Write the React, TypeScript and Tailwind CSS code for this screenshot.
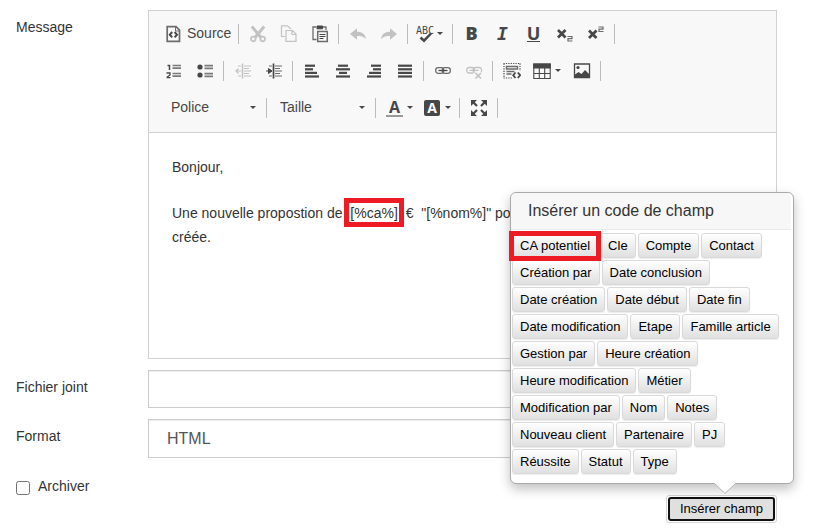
import type { ReactNode } from 'react';

function Icon({ children }: { children: ReactNode }) {
  return (
    <svg width="18" height="18" viewBox="0 0 18 18" fill="none" stroke="currentColor" strokeWidth="1.5" className="shrink-0" aria-hidden="true">
      {children}
    </svg>
  );
}

function Caret() {
  return <span className="h-0 w-0 shrink-0 border-x-[3px] border-t-[3px] border-x-transparent border-t-[#474747]" />;
}

function Tool({ label, children, disabled = false }: { label: string; children: ReactNode; disabled?: boolean }) {
  return (
    <button
      type="button"
      title={label}
      aria-label={label}
      disabled={disabled}
      className="flex h-7 w-[31px] items-center justify-center text-[#474747] disabled:text-[#c2c2c2]"
    >
      {children}
    </button>
  );
}

function MenuTool({ label, children }: { label: string; children: ReactNode }) {
  return (
    <button type="button" title={label} aria-label={label} className="flex h-7 w-[38px] items-center gap-[3px] pl-[5px] text-[#474747]">
      {children}
      <Caret />
    </button>
  );
}

function Combo({ label }: { label: string }) {
  return (
    <button type="button" className="flex h-7 w-[102px] items-center justify-between pr-[7px] pl-[10px] text-[14px] text-[#474747]">
      {label}
      <Caret />
    </button>
  );
}

function Sep() {
  return <span className="mx-[3px] h-5 w-px shrink-0 bg-[#bcbcbc]" />;
}

function Bars({ rows }: { rows: [number, number][] }) {
  return (
    <Icon>
      {rows.map(([from, to], i) => (
        <path key={i} d={`M${from} ${3.7 + i * 3.6}H${to}`} strokeWidth="2.2" />
      ))}
    </Icon>
  );
}

const undoPath = 'M1 9 8 3.2V6.800c5.200 0 8.200 2 9 7.400-2.500-2.700-5-3.200-9-3.200v3.700z';

function Toolbar() {
  return (
    <div role="toolbar" className="border-b border-[#d1d1d1] bg-[#f8f8f8] px-[9px] pt-1 pb-[6px]">
      <div className="flex h-[37px] items-center">
        <button type="button" className="flex h-7 w-[77px] items-center gap-1 pl-[7px] text-[14px] text-[#474747]">
          <Icon>
            <path d="M2.200 1.700H11L14.500 5.200V16.300H2.200z" stroke="#6b6b6b" strokeWidth="1.700" />
            <path d="M10.500 2v4h4" stroke="#6b6b6b" strokeWidth="1" />
            <path d="M7.200 7 4.800 9.700l2.400 2.700M9.600 7l2.400 2.700-2.400 2.700" strokeWidth="2" />
          </Icon>
          Source
        </button>
        <Sep />
        <Tool label="Couper" disabled>
          <Icon>
            <path d="M2.800 1.500 12 12.500M15.200 1.500 6 12.500" strokeWidth="3" />
            <circle cx="4.300" cy="14" r="2.300" strokeWidth="1.700" />
            <circle cx="13.700" cy="14" r="2.300" strokeWidth="1.700" />
          </Icon>
        </Tool>
        <Tool label="Copier" disabled>
          <Icon>
            <path d="M5 11.500H1.500V.8H7.500L11 4" strokeWidth="1.200" />
            <path d="M6 5.500H12.500L16 9V16.300H6zM12 5.500v4h4" strokeWidth="1.200" />
          </Icon>
        </Tool>
        <Tool label="Coller">
          <Icon>
            <path d="M5 2H2V14.500H5.500M12 2H15V5" stroke="#6b6b6b" strokeWidth="1.300" />
            <path d="M6 1h5.500v2.800H6z" fill="currentColor" strokeWidth="1" />
            <path d="M6.700 6.500H16.300V16.500H6.700z" stroke="#6b6b6b" />
            <path d="M8.500 9.500h6M8.500 11.500h6M8.500 13.500h4" strokeWidth="1" />
          </Icon>
        </Tool>
        <Sep />
        <Tool label="Annuler" disabled>
          <Icon><path d={undoPath} fill="currentColor" stroke="none" /></Icon>
        </Tool>
        <Tool label="Rétablir" disabled>
          <Icon><path d={undoPath} transform="matrix(-1 0 0 1 18 0)" fill="currentColor" stroke="none" /></Icon>
        </Tool>
        <Sep />
        <MenuTool label="Orthographe">
          <Icon>
            <text x="0" y="8.500" fontSize="10" fontFamily="DejaVu Sans Mono, monospace" fill="currentColor" stroke="none">ABC</text>
            <path d="M4.500 12.500 8 15.700 15 8.500" strokeWidth="2.500" />
          </Icon>
        </MenuTool>
        <Sep />
        <Tool label="Gras"><span className="pb-px font-['Open_Sans'] text-[18px] leading-[18px] font-extrabold">B</span></Tool>
        <Tool label="Italique"><span className="font-['DejaVu_Sans_Mono'] text-[18px] leading-5 font-bold italic">I</span></Tool>
        <Tool label="Souligné">
          <span className="border-b border-current font-['Open_Sans'] text-[18px] leading-[15px] font-bold">U</span>
        </Tool>
        <Tool label="Indice">
          <Icon>
            <path d="M2 5 9.500 12.500M9.500 5 2 12.500" strokeWidth="2.700" />
            <path d="M11.500 11.500h4.500v2.200h-4v2.300H16.500" stroke="#6b6b6b" strokeWidth="1.200" />
          </Icon>
        </Tool>
        <Tool label="Exposant">
          <Icon>
            <path d="M2 5.500 9.500 13M9.500 5.500 2 13" strokeWidth="2.700" />
            <path d="M11.500 2h4.500v2.200h-4v2.300H16.500" stroke="#6b6b6b" strokeWidth="1.200" />
          </Icon>
        </Tool>
        <Sep />
      </div>

      <div className="flex h-[37px] items-center">
        <Tool label="Liste numérotée">
          <Icon>
            <path d="M2.500 3.500H4.500V8" strokeWidth="1.500" />
            <path d="M1.500 11H5V13L2.200 15V15.600H5.500" strokeWidth="1.300" />
            <path d="M7.500 3.500h8.500M7.500 6.200h8.500M7.500 11.500h8.500M7.500 14.200h8.500" stroke="#7a7a7a" strokeWidth="1.700" />
          </Icon>
        </Tool>
        <Tool label="Liste à puces">
          <Icon>
            <circle cx="4" cy="5" r="2.600" fill="currentColor" stroke="none" />
            <circle cx="4" cy="13" r="2.600" fill="currentColor" stroke="none" />
            <path d="M8.500 3.700h8.500M8.500 6.400h8.500M8.500 11.700h8.500M8.500 14.400h8.500" stroke="#7a7a7a" strokeWidth="1.700" />
          </Icon>
        </Tool>
        <Sep />
        <Tool label="Diminuer le retrait" disabled>
          <Icon>
            <path d="M8.500 1.500V16.500" strokeWidth="1.500" />
            <path d="M7 9H2M4.500 6.500 2 9 4.500 11.500" strokeWidth="1.200" />
            <path d="M10 4h7M10 6.500h5M10 9h7M10 11.500h5M10 14h7M4 4h3M4 14h3" strokeWidth="1.100" />
          </Icon>
        </Tool>
        <Tool label="Augmenter le retrait">
          <Icon>
            <path d="M8.500 1.500V16.500" strokeWidth="1.700" />
            <path d="M1 9H7M3.500 6.500 7 9 3.500 11.500z" fill="currentColor" strokeWidth="1" />
            <path d="M10 4h7M10 6.500h5M10 9h7M10 11.500h5M10 14h7M4 4h3M4 14h3" stroke="#6b6b6b" strokeWidth="1.200" />
          </Icon>
        </Tool>
        <Sep />
        <Tool label="Aligner à gauche"><Bars rows={[[2, 12], [2, 10], [2, 14], [2, 16]]} /></Tool>
        <Tool label="Centrer"><Bars rows={[[4, 14], [2, 16], [5, 13], [2, 16]]} /></Tool>
        <Tool label="Aligner à droite"><Bars rows={[[6, 16], [8, 16], [4, 16], [2, 16]]} /></Tool>
        <Tool label="Justifier"><Bars rows={[[2, 16], [2, 16], [2, 16], [2, 16]]} /></Tool>
        <Sep />
        <Tool label="Lien">
          <Icon>
            <rect x="1.700" y="5.700" width="8" height="5.600" rx="2.500" stroke="#6b6b6b" strokeWidth="1.300" />
            <rect x="8.300" y="5.700" width="8" height="5.600" rx="2.500" stroke="#6b6b6b" strokeWidth="1.300" />
            <path d="M4.500 8.500h9" strokeWidth="1.300" />
          </Icon>
        </Tool>
        <Tool label="Supprimer le lien" disabled>
          <Icon>
            <path d="M8 11H4C1 11 1 5.500 4 5.500H7C10 5.500 10 9 8.500 9.500M9.500 11C7 9 8 5.500 10.500 5.500h3.500c3 0 3 3.500 2 4.500M4.500 8.300h9" strokeWidth="1.300" />
            <path d="M10.500 11l5.500 5.500M16 11l-5.500 5.500" strokeWidth="1.700" />
          </Icon>
        </Tool>
        <Sep />
        <Tool label="Créer un conteneur">
          <Icon>
            <path d="M.5 1.500H17.500M.5 16H9M1 1.500V16M17 1.500V9" strokeDasharray="1.200 1.200" strokeWidth="1.200" />
            <path d="M3.500 4.500H14.500V7H3.500zM3.500 9.500h8M3.500 12h5" stroke="#6b6b6b" strokeWidth="1.400" />
            <path d="M12.500 10.500 10.200 13.200l2.300 2.800M14.800 10.500l2.300 2.700-2.300 2.800" strokeWidth="1.800" />
          </Icon>
        </Tool>
        <button type="button" title="Tableau" aria-label="Tableau" className="flex h-7 w-[39px] items-center gap-1 pl-[6px] text-[#474747]">
          <Icon>
            <path d="M.8 2H17.200V16.500H.8zM1 11.500h16M6.300 6v10.500M11.700 6v10.500" strokeWidth="1.100" />
            <path d="M.2 1.500H17.800V6.500H.2z" fill="currentColor" stroke="none" />
          </Icon>
          <Caret />
        </button>
        <Tool label="Image">
          <Icon>
            <path d="M1.500 2H16.500V15.500H1.500z" strokeWidth="1.300" />
            <circle cx="5" cy="5.500" r="1.600" fill="currentColor" stroke="none" />
            <path d="M2 15V12.500L5.500 10l3 2L12 8l4 4v3z" fill="currentColor" stroke="none" />
          </Icon>
        </Tool>
        <Sep />
      </div>

      <div className="flex h-[37px] items-center">
        <span className="pl-[3px]"><Combo label="Police" /></span>
        <Sep />
        <Combo label="Taille" />
        <Sep />
        <button type="button" title="Couleur du texte" aria-label="Couleur du texte" className="flex h-7 w-[38px] items-center gap-1 pl-[7px] text-[#474747]">
          <span className="w-[17px] border-b-2 border-[#999] text-center font-['Open_Sans'] text-[16px] leading-4 font-bold">A</span>
          <Caret />
        </button>
        <button type="button" title="Couleur d'arrière-plan" aria-label="Couleur d'arrière-plan" className="flex h-7 w-[39px] items-center gap-[5px] pl-[7px] text-[#474747]">
          <span className="h-4 w-4 rounded-[2px] bg-[#474747] text-center font-['Open_Sans'] text-[14px] leading-4 font-bold text-white">A</span>
          <Caret />
        </button>
        <Sep />
        <Tool label="Agrandir">
          <Icon>
            <path d="M2.500 2.500 7 7M15.500 2.500 11 7M2.500 15.500 7 11M15.500 15.500 11 11" strokeWidth="2.200" />
            <path d="M1 1h6L1 7zM17 1h-6l6 6zM1 17h6l-6-6zM17 17h-6l6-6z" fill="currentColor" stroke="none" />
          </Icon>
        </Tool>
        <Sep />
      </div>
    </div>
  );
}

const fieldRows = [
  ['CA potentiel', 'Cle', 'Compte', 'Contact'],
  ['Création par', 'Date conclusion'],
  ['Date création', 'Date début', 'Date fin'],
  ['Date modification', 'Etape', 'Famille article'],
  ['Gestion par', 'Heure création'],
  ['Heure modification', 'Métier'],
  ['Modification par', 'Nom', 'Notes'],
  ['Nouveau client', 'Partenaire', 'PJ'],
  ['Réussite', 'Statut', 'Type'],
];

function FieldPopover() {
  return (
    <div
      role="dialog"
      aria-label="Insérer un code de champ"
      className="absolute -right-[17px] bottom-full mb-[11px] w-[284px] rounded-md border border-[#a9a9a9] bg-white pr-[2px] pb-[9px] shadow-[0_5px_12px_rgba(0,0,0,0.25)]"
    >
      <h3 className="rounded-t-md border-b border-[#ebebeb] bg-[#f7f7f7] px-[17px] text-[16px] leading-9 text-[#333]">Insérer un code de champ</h3>
      <div className="flex flex-col gap-[2px] pt-[3px] pl-px">
        {fieldRows.map((row, r) => (
          <div key={r} className="flex gap-[2px]">
            {row.map((name, c) => (
              <button
                key={name}
                type="button"
                className="relative h-[25px] rounded-[3px] border border-[#d9d9d9] bg-linear-to-b from-white to-[#e0e0e0] px-[7px] text-[13px] leading-[22px] whitespace-nowrap text-black shadow-[0_1px_1px_rgba(0,0,0,0.08)]"
              >
                {name}
                {r === 0 && c === 0 && <span className="absolute -inset-x-1 -top-[3px] -bottom-1 z-10 border-[5px] border-[#ed1c24]" />}
              </button>
            ))}
          </div>
        ))}
      </div>
      <svg width="24" height="12" viewBox="0 0 24 12" className="absolute top-full right-[56px]" aria-hidden="true">
        <path d="M0 -1 12 10.500 24 -1z" fill="#fff" />
        <path d="M1 0 12 10.500 23 0" fill="none" stroke="#b5b5b5" />
      </svg>
    </div>
  );
}

export default function App() {
  return (
    <form className="pt-[10px] pr-[47px] pb-[7px] pl-4 font-['Liberation_Sans',Arial,sans-serif] text-[14px] text-[#333]">
      <div className="flex">
        <span id="message-label" className="w-[132px] shrink-0 pt-[7px] leading-5">Message</span>
        <div className="min-w-0 flex-1 border border-[#d1d1d1]">
          <Toolbar />
          <div role="textbox" aria-labelledby="message-label" aria-multiline="true" contentEditable suppressContentEditableWarning className="min-h-[225px] px-[23px] pt-[22px] leading-6 outline-none">
            <p className="mb-[22px]">Bonjour,</p>
            <p>
              Une nouvelle propostion de{' '}
              <span className="relative mx-1">
                [%ca%]
                <span className="absolute -inset-x-[6px] -top-[7px] -bottom-[6px] border-[5px] border-[#ed1c24]" />
              </span>{' '}
              €&nbsp; "[%nom%]" pour
              <br />
              créée.
            </p>
          </div>
        </div>
      </div>

      <div className="mt-[11px] flex">
        <label htmlFor="file" className="w-[132px] shrink-0 pt-[7px] leading-5">Fichier joint</label>
        <input id="file" type="text" className="h-[38px] min-w-0 flex-1 border border-[#ccc] px-[18px] text-[16px] shadow-[inset_0_1px_1px_rgba(0,0,0,0.075)] outline-none" />
      </div>

      <div className="mt-[11px] flex">
        <label htmlFor="format" className="w-[132px] shrink-0 pt-[7px] leading-5">Format</label>
        <select id="format" className="h-[39px] min-w-0 flex-1 appearance-none border border-[#ccc] bg-white px-[18px] text-[16px] text-[#555] shadow-[inset_0_1px_1px_rgba(0,0,0,0.075)]">
          <option>HTML</option>
        </select>
      </div>

      <label className="mt-[18px] flex h-[19px] items-start gap-2 leading-5">
        <input type="checkbox" className="mt-[5px] h-[14px] w-[14px] shrink-0" />
        Archiver
      </label>

      <div className="flex justify-end">
        <div className="relative">
          <FieldPopover />
          <button type="button" className="block h-7 rounded-[3px] border border-[#d4d4d4] bg-white p-px text-[13px] text-black">
            <span className="flex h-6 items-center rounded-[3px] border-2 border-[#111] bg-[#e0e0e0] px-[10px]">Insérer champ</span>
          </button>
        </div>
      </div>
    </form>
  );
}
